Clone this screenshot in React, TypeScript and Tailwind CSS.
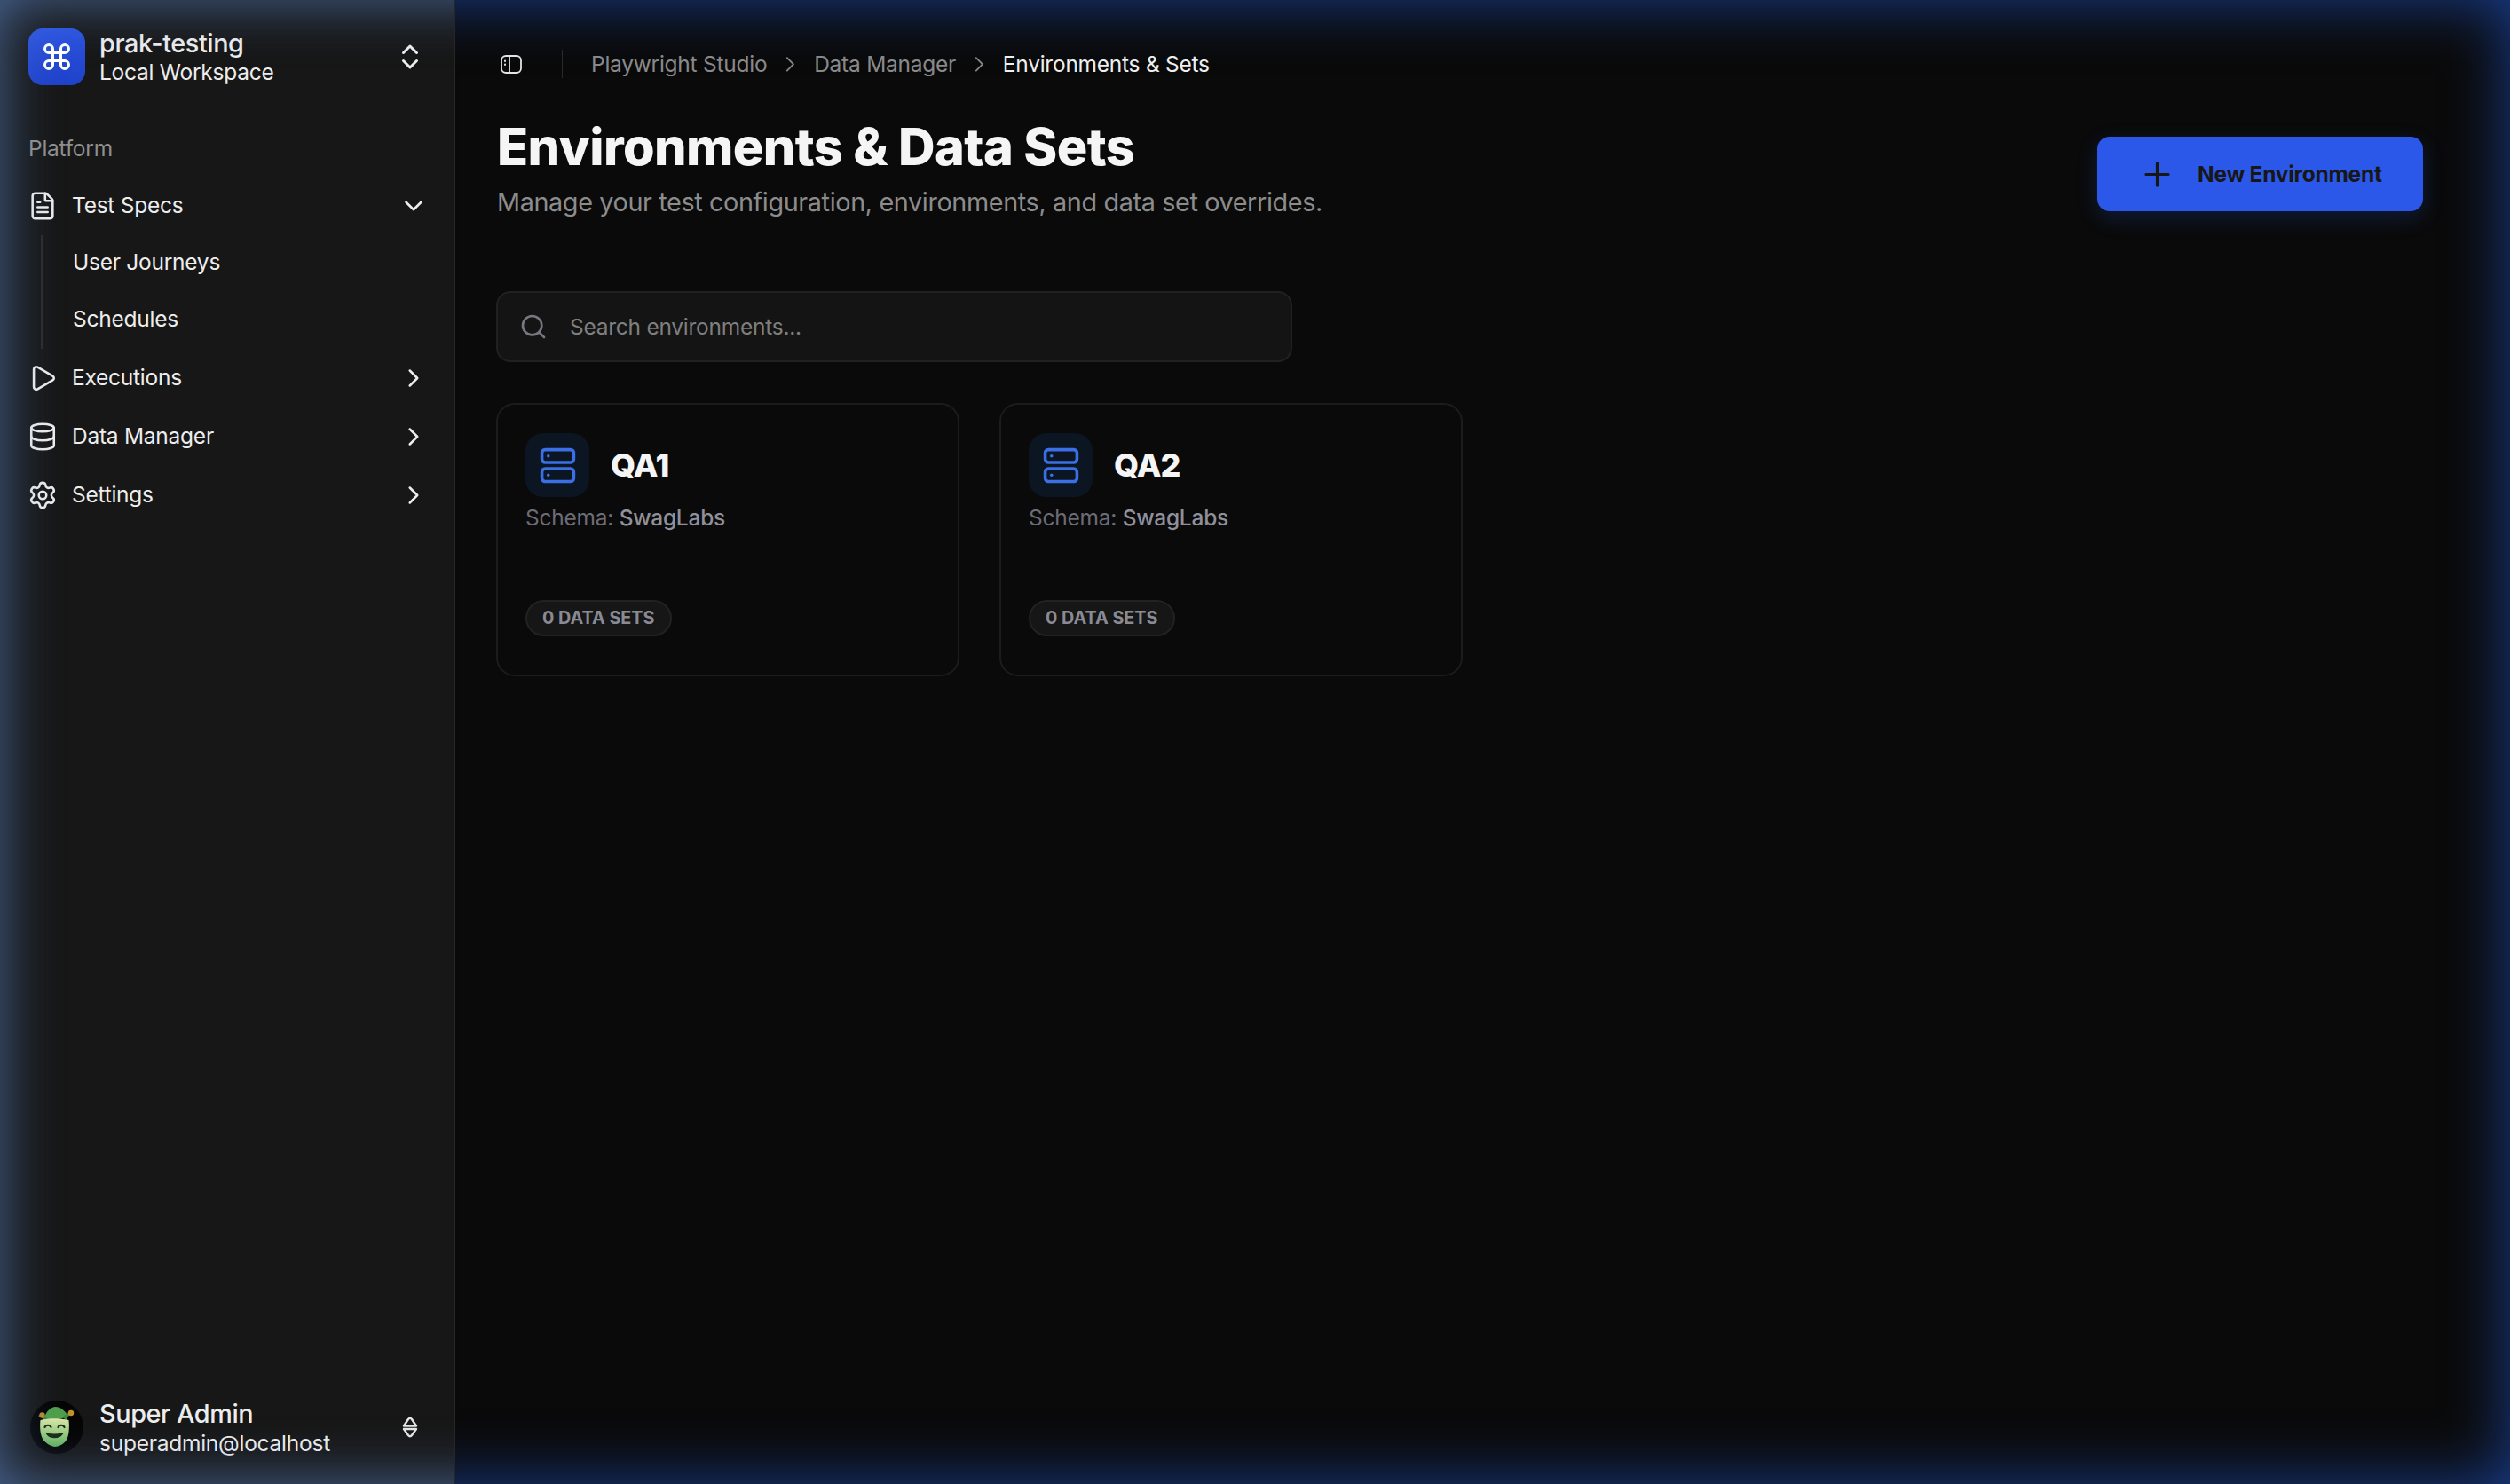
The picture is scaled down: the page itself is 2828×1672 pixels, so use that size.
import {
  ChevronDown,
  ChevronRight,
  ChevronsUpDown,
  Command,
  Database,
  FileText,
  Play,
  Plus,
  Search,
  Server,
  Settings,
} from "lucide-react";

const navItems = [
  { label: "Executions", icon: Play },
  { label: "Data Manager", icon: Database },
  { label: "Settings", icon: Settings },
];

const environments = ["QA1", "QA2"];

const JesterAvatar = () => (
  <svg viewBox="0 0 60 60" className="w-[60px] h-[60px] shrink-0">
    <defs>
      <linearGradient id="mask" x1="0" y1="0" x2="0" y2="1">
        <stop offset="0" stopColor="#dbe8a8" />
        <stop offset="1" stopColor="#5fb35c" />
      </linearGradient>
    </defs>
    <circle cx="30" cy="30" r="30" fill="#050505" />
    <g transform="translate(-1.500 -2)">
      <path d="M17 23c2-9 8-14 13-14 6 0 11 5 14 10-5 3-10 4-14 4-5 0-9 0-13 0z" fill="#4f9e4c" />
      <path d="M10 19c5-2 9 0 11 4l-4 2c-1-3-3-5-7-6zM49 16c-4-1-8 1-11 5l4 3c1-3 3-6 7-8z" fill="#3f8a3f" />
      <circle cx="15" cy="18.500" r="3.200" fill="#b98a2f" />
      <circle cx="47.500" cy="16" r="3.200" fill="#c2912f" />
      <path d="M13 24c10-2.500 22-2.500 32 0 1 10 0 18-3 23-3 4-8 7-13 7-5-1-10-4-13-8-3-5-4-13-3-22z" fill="url(#mask)" />
      <path d="M18 32c1-3 6-3 7 0M33 32c1-3 6-3 7 0" fill="none" stroke="#1c2b16" strokeWidth="2.200" strokeLinecap="round" />
      <path d="M20 39c3 6 14 6 18 0-5 1.500-13 1.500-18 0z" fill="#1c2b16" stroke="#1c2b16" strokeWidth="1.500" strokeLinejoin="round" />
    </g>
  </svg>
);

const UpDownClosed = () => (
  <svg viewBox="0 0 18 26" className="w-[18px] h-[26px]" fill="none" stroke="#e5e5e5" strokeWidth="2.400" strokeLinejoin="round" strokeLinecap="round">
    <path d="M2 11.500 7 4q2-2.500 4 0l5 7.500z" />
    <path d="M2 15 7 22q2 2.500 4 0l5-7z" />
  </svg>
);

const SidebarToggle = () => (
  <svg viewBox="0 0 24 21" className="w-[24px] h-[21px] text-[#e5e5e5]" fill="none" stroke="currentColor" strokeWidth="1.800">
    <rect x="1" y="1" width="22" height="19" rx="5" />
    <path d="M10 1v19" />
    <path d="M5 6.500v.6M5 10.500v.6" strokeWidth="2" strokeLinecap="round" />
  </svg>
);

const EnvCard = ({ name }: { name: string }) => (
  <div className="w-[522px] h-[308px] rounded-[21px] border-2 border-[#1c1c1c] bg-[#0a0a0a] pt-[32px] px-[31px]">
    <div className="flex items-center gap-[24px]">
      <div className="w-[72px] h-[72px] rounded-[20px] bg-[#0c1522] flex items-center justify-center">
        <Server className="w-[43px] h-[43px] text-[#3a6fe6]" strokeWidth={2} />
      </div>
      <span className="text-[36px] font-extrabold text-[#f5f5f5] tracking-[-0.800px]">{name}</span>
    </div>
    <p className="mt-[8px] h-[30px] leading-[30px] text-[24.500px] tracking-[-0.250px] text-[#6c6c76]">
      Schema: <span className="font-medium text-[#90909a]">SwagLabs</span>
    </p>
    <div className="mt-[78px] w-fit h-[41px] px-[17px] rounded-full border-2 border-[#222222] bg-[#161616] flex items-center text-[19.800px] font-bold text-[#8a8a94]">
      0 DATA SETS
    </div>
  </div>
);

export default function App() {
  return (
    <div className="flex h-screen w-full overflow-hidden bg-[#0a0a0a] font-['Inter',sans-serif]">
      <aside className="relative w-[513px] shrink-0 overflow-hidden border-r border-[#262626] bg-[#171717] flex flex-col text-[#ededed]">
        <div className="pointer-events-none absolute inset-y-0 left-0 -right-[80px] shadow-[inset_0_0_64px_rgba(95,138,205,0.7)]" />

        <div className="mt-[32px] px-[32px] h-[64px] flex items-center shrink-0">
          <div className="w-[64px] h-[64px] rounded-[16px] bg-gradient-to-b from-[#2b52e0] to-[#1f42c9] flex items-center justify-center">
            <Command className="w-[36px] h-[36px] text-white" strokeWidth={2} />
          </div>
          <div className="ml-[16px] flex flex-col">
            <span className="text-[28.800px] leading-[33px] font-medium tracking-[-0.400px]">prak-testing</span>
            <span className="mt-[1px] text-[24.500px] leading-[31px] tracking-[-0.250px]">Local Workspace</span>
          </div>
          <ChevronsUpDown className="ml-auto w-[36px] h-[36px]" />
        </div>

        <div className="mt-[42px] mb-[3px] px-[32px] h-[58px] flex items-center text-[24.500px] tracking-[-0.250px] text-[#8f8f8f] shrink-0">
          Platform
        </div>

        <div className="pl-[31px] pr-[29px] h-[66px] flex items-center shrink-0">
          <FileText className="w-[34px] h-[34px]" strokeWidth={1.800} />
          <span className="ml-[16px] pb-[1px] text-[24.500px] tracking-[-0.250px]">Test Specs</span>
          <ChevronDown className="ml-auto w-[34px] h-[34px]" strokeWidth={1.800} />
        </div>
        <div className="ml-[46px] border-l-2 border-[#2a2a2a] flex flex-col shrink-0">
          {["User Journeys", "Schedules"].map((label) => (
            <div key={label} className="pl-[34px] pb-[3px] h-[64px] flex items-center text-[24.500px] tracking-[-0.250px]">
              {label}
            </div>
          ))}
        </div>
        {navItems.map(({ label, icon: Icon }) => (
          <div key={label} className="pl-[31px] pr-[29px] h-[66px] flex items-center shrink-0">
            <Icon className="w-[34px] h-[34px]" strokeWidth={1.800} />
            <span className="ml-[16px] pb-[1px] text-[24.500px] tracking-[-0.250px]">{label}</span>
            <ChevronRight className="ml-auto w-[34px] h-[34px]" strokeWidth={1.800} />
          </div>
        ))}

        <div className="mt-auto mb-[34px] h-[60px] pl-[34px] pr-[41px] flex items-center shrink-0">
          <JesterAvatar />
          <div className="ml-[18px] flex flex-col pt-[2px]">
            <span className="text-[28.800px] leading-[33px] font-medium tracking-[-0.400px]">Super Admin</span>
            <span className="mt-[2px] text-[24.500px] leading-[31px] tracking-[-0.250px]">superadmin@localhost</span>
          </div>
          <div className="ml-auto">
            <UpDownClosed />
          </div>
        </div>
      </aside>

      <main className="relative flex-1 overflow-hidden pl-[46px] pr-[98px]">
        <div className="pointer-events-none absolute inset-y-0 right-0 -left-[80px] shadow-[inset_0_0_70px_rgba(37,99,235,0.6)]" />

        <div className="h-[144px] -mb-[14px] flex items-center text-[24.500px] tracking-[-0.250px] text-[#8a8a8a]">
          <div className="ml-[5px]">
            <SidebarToggle />
          </div>
          <div className="ml-[45px] w-px h-[32px] bg-[#2a2a2a]" />
          <span className="ml-[32px] pt-[1px]">Playwright Studio</span>
          <ChevronRight className="mx-[12px] w-[28.800px] h-[28.800px]" strokeWidth={1.500} />
          <span className="pt-[1px]">Data Manager</span>
          <ChevronRight className="mx-[12px] w-[28.800px] h-[28.800px]" strokeWidth={1.500} />
          <span className="pt-[1px] text-[#f0f0f0]">Environments &amp; Sets</span>
        </div>

        <div className="flex items-start justify-between">
          <div>
            <h1 className="ml-[1px] h-[70px] leading-[70px] text-[57.600px] font-extrabold tracking-[-0.600px] text-[#f5f5f5]">
              Environments &amp; Data Sets
            </h1>
            <p className="ml-[1px] mt-[8px] h-[40px] leading-[40px] text-[28.800px] tracking-[-0.380px] text-[#8c8c8c]">
              Manage your test configuration, environments, and data set overrides.
            </p>
          </div>
          <button className="mt-[24px] w-[367px] h-[84px] rounded-[14px] bg-[#2b58e8] flex items-center pl-[46px] gap-[24px] text-[24.500px] tracking-[-0.250px] font-bold text-[#171717] shadow-[0_8px_24px_rgba(37,99,235,0.2)]">
            <Plus className="w-[43px] h-[43px]" strokeWidth={1.800} />
            <span className="pt-[1px]">New Environment</span>
          </button>
        </div>

        <div className="mt-[80px] w-[897px] h-[80px] rounded-[16px] border-2 border-[#212121] bg-[#141414] flex items-center pl-[24px]">
          <Search className="w-[32px] h-[32px] text-[#77777f]" strokeWidth={2} />
          <span className="ml-[25px] pt-[1px] text-[24.500px] tracking-[-0.250px] text-[#7f7f7f]">Search environments...</span>
        </div>

        <div className="mt-[46px] flex gap-[45px]">
          {environments.map((name) => (
            <EnvCard key={name} name={name} />
          ))}
        </div>
      </main>
    </div>
  );
}
